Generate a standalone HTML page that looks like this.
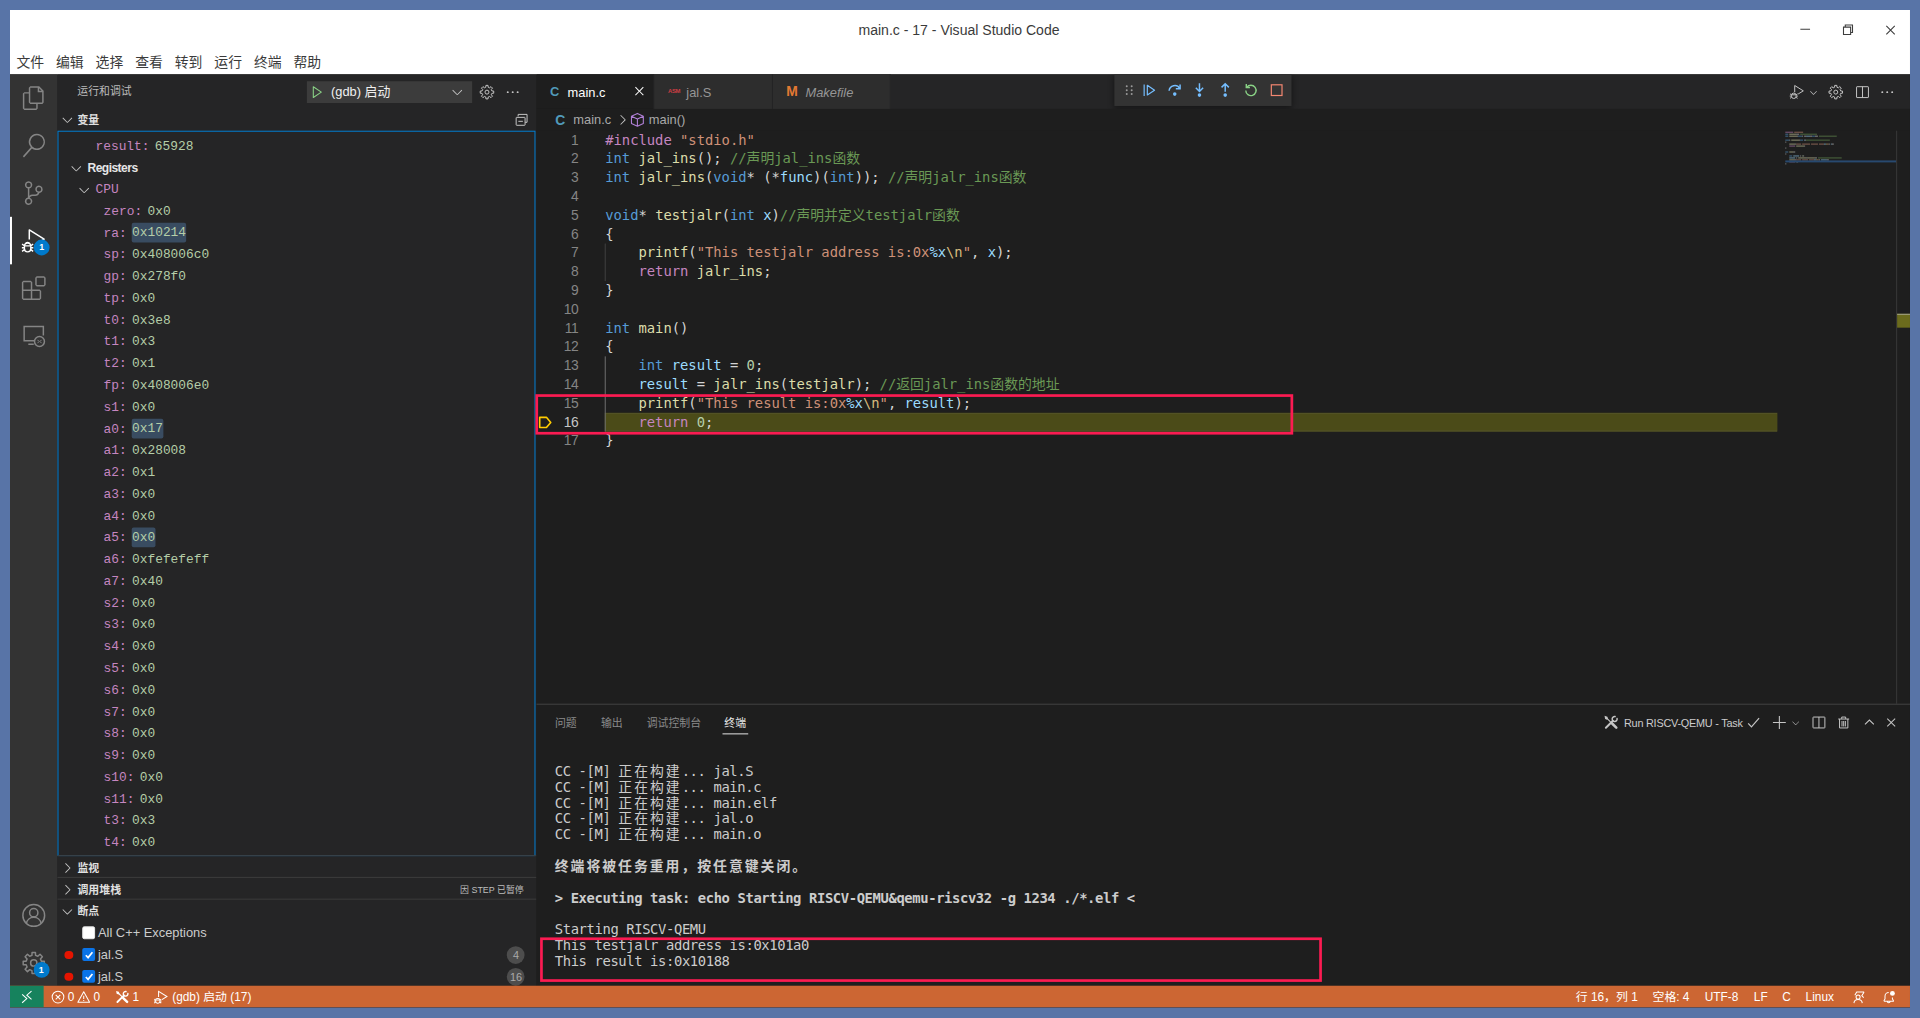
<!DOCTYPE html>
<html lang="zh-CN">
<head>
<meta charset="utf-8">
<title>main.c - 17 - Visual Studio Code</title>
<style>
*{box-sizing:border-box;margin:0;padding:0}
html,body{width:1920px;height:1018px;overflow:hidden}
body{background:#5874a7;position:relative;font-family:"Liberation Sans","Noto Sans CJK SC",sans-serif;font-size:13px;color:#ccc}
#win{position:absolute;left:10px;top:10px;width:1920px;height:1008.2px;transform:scale(0.98958);transform-origin:0 0;background:#1e1e1e;overflow:hidden}
.abs{position:absolute}
svg{display:block;overflow:visible}
.mono{font-family:"Liberation Mono","Noto Sans CJK SC",monospace}
.code{font-family:"DejaVu Sans Mono","Noto Sans CJK SC",monospace}
/* title + menu */
#title{left:0;top:0;width:1920px;height:65px;background:#fff}
#title .t{position:absolute;left:0;width:1918px;top:10px;height:20px;line-height:20px;text-align:center;font-size:14.2px;color:#3b3b3b}
#menu{position:absolute;left:0.5px;top:42px;height:22px;display:flex;font-size:14px;color:#3b3b3b;line-height:22px}
#menu span{display:block;width:40px;text-align:center}
/* activity bar */
#act{left:0;top:65px;width:48px;height:921.5px;background:#333}
#act .ic{position:absolute;left:12px;width:24px;height:24px}
/* sidebar */
#side{left:48px;top:65px;width:483.5px;height:921.5px;background:#252526}
/* editor */
#tabs{left:531.5px;top:65px;width:1388.5px;height:35px;background:#252526}
.tab{position:absolute;top:0;height:35px;background:#2d2d2d;border-right:1px solid #252526;font-size:13px;line-height:35px;color:#969696}
#bc{left:531.5px;top:100px;width:1388.5px;height:22px;background:#1e1e1e;font-size:13px;line-height:22px;color:#a9a9a9}
#ed{left:531.5px;top:122px;width:1388.5px;height:580px;background:#1e1e1e}
.ln{position:absolute;left:0;width:42.8px;text-align:right;font-size:14px;letter-spacing:-0.4px;line-height:19px;height:19px;color:#858585;font-family:"Liberation Sans","Noto Sans CJK SC",sans-serif}
.cl{position:absolute;left:70px;white-space:pre;font-size:14px;line-height:19px;height:19px;color:#d4d4d4;letter-spacing:-0.03px}
.k{color:#569cd6}.f{color:#dcdcaa}.v{color:#9cdcfe}.c{color:#6a9955}.s{color:#ce9178}.m{color:#c586c0}.n{color:#b5cea8}.e{color:#d7ba7d}
/* panel */
#panel{left:531.5px;top:702px;width:1388.5px;height:284.5px;background:#1e1e1e;border-top:1px solid #444}
.tl{position:absolute;left:19px;white-space:pre;font-size:14px;line-height:16px;height:16px;color:#ccc;letter-spacing:-0.40px}
.tl i{font-style:normal;letter-spacing:2px}
/* status */
#status{left:0;top:986.4px;width:1920px;height:21.8px;background:#cc6633;color:#fff;font-size:12px;line-height:22px}
#status .it{position:absolute;top:0;white-space:pre}
/* tree rows */
.row{position:absolute;left:0;width:483.5px;height:22px;line-height:22px;font-size:13px;white-space:pre}
.row .nm{color:#c586c0}.row .val{color:#b5cea8}
.row .chg{background:#394c61;border-radius:2px;padding:2.6px 0}
.hdr{position:absolute;left:0;width:483.5px;height:22px;line-height:22px;font-size:11px;font-weight:bold;color:#e0e0e0;border-top:1px solid #3c3c3c}
.red{position:absolute;border:2.7px solid #fb1b52}
</style>
</head>
<body>
<div id="win">
<div id="title" class="abs" style="height:64.7px">
<div class="t">main.c - 17 - Visual Studio Code</div>
<svg class="abs" style="left:1800px;top:8px" width="116" height="24" viewBox="1800 8 116 24" fill="none" stroke="#3d3d3d" stroke-width="1.1">
<path d="M1809.2 19.5H1819"/>
<path d="M1852.8 17.3h7.2v7.4h-7.2zM1854.6 17.3v-2.1h7.3v7.5h-1.9"/>
<path d="M1896.1 16.1l8.5 8.5M1904.6 16.1l-8.5 8.5"/>
</svg>
<div id="menu"><span>文件</span><span>编辑</span><span>选择</span><span>查看</span><span>转到</span><span>运行</span><span>终端</span><span>帮助</span></div>
</div>
<div id="act" class="abs" style="top:64.7px"><svg class="abs" style="left:12px;top:12.0px" width="24" height="24" viewBox="0 0 24 24" fill="#858585"><path d="M17.5 0h-9L7 1.5V6H2.5L1 7.5v15.07L2.5 24h12.07L16 22.57V18h4.7l1.3-1.43V4.5L17.5 0zm0 2.12l2.38 2.38H17.5V2.12zm-3 20.38h-12v-15H7v9.07L8.5 18h6v4.5zm6-6h-12v-15H16V6h4.5v10.5z"/></svg><svg class="abs" style="left:12px;top:60.0px" width="24" height="24" viewBox="0 0 24 24" fill="#858585"><path d="M15.25 0a8.25 8.25 0 0 0-6.18 13.72L1 22.88l1.12 1.12 8.05-9.12A8.251 8.251 0 1 0 15.25.01V0zm0 15a6.75 6.75 0 1 1 0-13.5 6.75 6.75 0 0 1 0 13.5z"/></svg><svg class="abs" style="left:12px;top:108.0px" width="24" height="24" viewBox="0 0 24 24" fill="#858585"><path d="M21.007 8.222A3.738 3.738 0 0 0 15.045 5.2a3.737 3.737 0 0 0 1.156 6.583 2.988 2.988 0 0 1-2.668 1.67h-2.99a4.456 4.456 0 0 0-2.989 1.165V7.4a3.737 3.737 0 1 0-1.494 0v9.117a3.776 3.776 0 1 0 1.816.099 2.99 2.99 0 0 1 2.668-1.667h2.99a4.484 4.484 0 0 0 4.223-3.039 3.736 3.736 0 0 0 3.25-3.687zM4.565 3.738a2.242 2.242 0 1 1 4.484 0 2.242 2.242 0 0 1-4.484 0zm4.484 16.441a2.242 2.242 0 1 1-4.484 0 2.242 2.242 0 0 1 4.484 0zm8.221-9.715a2.242 2.242 0 1 1 0-4.485 2.242 2.242 0 0 1 0 4.485z"/></svg><svg class="abs" style="left:12px;top:156.0px" width="24" height="24" viewBox="0 0 24 24" fill="#fff"><g fill="none" stroke="#fff" stroke-width="1.5" stroke-linejoin="round"><path d="M7.5 11V1.2l15 9.3-8.8 5.500"/></g><g fill="none" stroke="#fff" stroke-width="1.4"><rect x="2.600" y="14.600" width="6.400" height="8.800" rx="3.100"/><path d="M3.600 15.400a2.300 2.300 0 0 1 4.400 0M2.600 17.200L.2 15.600M2.600 19.300H0M2.600 21.200L.2 22.900M9 17.200l2.400-1.600M9 19.300h2.600M9 21.200l2.400 1.700M2.900 17.400h5.800"/></g></svg><svg class="abs" style="left:12px;top:204.0px" width="24" height="24" viewBox="0 0 24 24" fill="#858585"><path d="M13.5 1.5L15 0h7.5L24 1.5V9l-1.5 1.5H15L13.5 9V1.5zm1.5 0V9h7.5V1.5H15zM0 15V6l1.5-1.5H9L10.5 6v7.5H18l1.5 1.5v7.5L18 24H1.5L0 22.5V15zm9-1.5V6H1.5v7.5H9zM9 15H1.5v7.5H9V15zm1.5 7.5H18V15h-7.5v7.5z"/></svg><svg class="abs" style="left:12px;top:252.0px" width="24" height="24" viewBox="0 0 24 24" fill="#858585"><g fill="none" stroke="#858585" stroke-width="1.5"><path d="M13 17.2H2.3V2.8h19.4v9.2M6.5 20.8h5.5"/><circle cx="17.8" cy="18" r="5"/><path d="M15.8 16.3l1.6 1.7-1.6 1.7M19.9 16.3l-1.6 1.7 1.6 1.7" stroke-width="1"/></g></svg><div class="abs" style="left:0;top:144px;width:2px;height:48px;background:#fff"></div><div class="abs" style="left:24.2px;top:167.5px;width:16px;height:16px;border-radius:8px;background:#007acc;color:#fff;font-size:9px;font-weight:bold;line-height:16px;text-align:center">1</div><svg class="abs" style="left:12px;top:838px" width="24" height="24" viewBox="0 0 24 24"><g fill="none" stroke="#858585" stroke-width="1.5"><circle cx="12" cy="12" r="11"/><circle cx="12" cy="9.2" r="4.2"/><path d="M4.6 20c.6-3.6 3.6-6.2 7.4-6.2s6.800 2.600 7.400 6.200"/></g></svg><svg class="abs" style="left:12px;top:886px" width="24" height="24" viewBox="0 0 24 24"><g fill="none" stroke="#858585" stroke-width="1.5" stroke-linejoin="round"><path d="M10.16 4.32 L10.31 1.33 L13.69 1.33 L13.84 4.32 L16.13 5.26 L18.35 3.26 L20.74 5.65 L18.74 7.87 L19.68 10.16 L22.67 10.31 L22.67 13.69 L19.68 13.84 L18.74 16.13 L20.74 18.35 L18.35 20.74 L16.13 18.74 L13.84 19.68 L13.69 22.67 L10.31 22.67 L10.16 19.68 L7.87 18.74 L5.65 20.74 L3.26 18.35 L5.26 16.13 L4.32 13.84 L1.33 13.69 L1.33 10.31 L4.32 10.16 L5.26 7.87 L3.26 5.65 L5.65 3.26 L7.87 5.26Z"/><circle cx="12" cy="12" r="3.200"/></g></svg><div class="abs" style="left:23.5px;top:897.3px;width:16px;height:16px;border-radius:8px;background:#007acc;color:#fff;font-size:9px;font-weight:bold;line-height:16px;text-align:center">1</div></div>
<div id="side" class="abs" style="top:64.7px"><div class="abs" style="left:20px;top:7px;line-height:21px;font-size:11px;color:#bbb">运行和调试</div><div class="abs" style="left:252px;top:7.3px;width:167px;height:22px;background:#3c3c3c;color:#f0f0f0;font-size:13px;line-height:22px"><span class="abs" style="left:24.4px;top:0;white-space:pre">(gdb) 启动</span><svg class="abs" style="left:2px;top:3.3px" width="16" height="16" viewBox="0 0 16 16"><path fill="none" stroke="#89d185" stroke-width="1.1" stroke-linejoin="round" d="M4.5 2.6v10.8L12.6 8z"/></svg><svg class="abs" style="left:143.7px;top:3.0px" width="16" height="16" viewBox="0 0 16 16" fill="#c5c5c5"><path fill="#c5c5c5" d="M7.976 10.072l4.357-4.357.62.618L8.284 11h-.618L3 6.333l.619-.618 4.357 4.357z"/></svg></div><svg class="abs" style="left:425.6px;top:10.4px" width="16" height="16" viewBox="0 0 16 16"><g fill="none" stroke="#c5c5c5" stroke-width="1" stroke-linejoin="round"><path d="M6.81 3.04 L6.92 1.18 L9.08 1.18 L9.19 3.04 L10.66 3.65 L12.06 2.42 L13.58 3.94 L12.35 5.34 L12.96 6.81 L14.82 6.92 L14.82 9.08 L12.96 9.19 L12.35 10.66 L13.58 12.06 L12.06 13.58 L10.66 12.35 L9.19 12.96 L9.08 14.82 L6.92 14.82 L6.81 12.96 L5.34 12.35 L3.94 13.58 L2.42 12.06 L3.65 10.66 L3.04 9.19 L1.18 9.08 L1.18 6.92 L3.04 6.81 L3.65 5.34 L2.42 3.94 L3.94 2.42 L5.34 3.65Z"/><circle cx="8" cy="8" r="2"/></g></svg><svg class="abs" style="left:452.0px;top:10.4px" width="16" height="16" viewBox="0 0 16 16" fill="#c5c5c5"><path d="M4 8a1 1 0 1 1-2 0 1 1 0 0 1 2 0zm5 0a1 1 0 1 1-2 0 1 1 0 0 1 2 0zm5 0a1 1 0 1 1-2 0 1 1 0 0 1 2 0z"/></svg><div class="hdr" style="top:35px;border-top:none"><span class="abs" style="left:20.2px">变量</span><svg class="abs" style="left:1.6px;top:3.0px" width="16" height="16" viewBox="0 0 16 16" fill="#c5c5c5"><path fill="#c5c5c5" d="M7.976 10.072l4.357-4.357.62.618L8.284 11h-.618L3 6.333l.619-.618 4.357 4.357z"/></svg><svg class="abs" style="left:461px;top:3px" width="16" height="16" viewBox="0 0 16 16" fill="none" stroke="#c5c5c5" stroke-width="1"><path d="M4.5 4.5V2.5h9v8h-2"/><rect x="2.5" y="5.5" width="9" height="8" rx="0.5" fill="#252526"/><path d="M4.7 9.5h4.6"/></svg></div><div class="abs" style="left:-0.5px;top:57px;width:483.4px;height:733px;border:1px solid #007fd4;overflow:hidden"></div><div class="row mono" style="top:62.2px"><span class="abs" style="left:38.4px"><span class="nm">result:</span><span class="val" style="margin-left:5.4px">65928</span></span></div><div class="row" style="top:84.2px"><svg class="abs" style="left:10.7px;top:3.0px" width="16" height="16" viewBox="0 0 16 16" fill="#c5c5c5"><path fill="#c5c5c5" d="M7.976 10.072l4.357-4.357.62.618L8.284 11h-.618L3 6.333l.619-.618 4.357 4.357z"/></svg><span class="abs" style="left:30.3px;font-weight:bold;color:#e6e6e6;font-size:12.2px;letter-spacing:-0.55px">Registers</span></div><div class="row mono" style="top:106.2px"><svg class="abs" style="left:18.8px;top:3.0px" width="16" height="16" viewBox="0 0 16 16" fill="#c5c5c5"><path fill="#c5c5c5" d="M7.976 10.072l4.357-4.357.62.618L8.284 11h-.618L3 6.333l.619-.618 4.357 4.357z"/></svg><span class="abs nm" style="left:38.4px">CPU</span></div><div class="row mono" style="top:128.2px"><span class="abs" style="left:46.5px"><span class="nm">zero:</span><span class="val" style="margin-left:5.4px">0x0</span></span></div><div class="row mono" style="top:150.2px"><span class="abs" style="left:46.5px"><span class="nm">ra:</span><span class="val chg" style="margin-left:5.4px">0x10214</span></span></div><div class="row mono" style="top:172.2px"><span class="abs" style="left:46.5px"><span class="nm">sp:</span><span class="val" style="margin-left:5.4px">0x408006c0</span></span></div><div class="row mono" style="top:194.2px"><span class="abs" style="left:46.5px"><span class="nm">gp:</span><span class="val" style="margin-left:5.4px">0x278f0</span></span></div><div class="row mono" style="top:216.2px"><span class="abs" style="left:46.5px"><span class="nm">tp:</span><span class="val" style="margin-left:5.4px">0x0</span></span></div><div class="row mono" style="top:238.2px"><span class="abs" style="left:46.5px"><span class="nm">t0:</span><span class="val" style="margin-left:5.4px">0x3e8</span></span></div><div class="row mono" style="top:260.2px"><span class="abs" style="left:46.5px"><span class="nm">t1:</span><span class="val" style="margin-left:5.4px">0x3</span></span></div><div class="row mono" style="top:282.2px"><span class="abs" style="left:46.5px"><span class="nm">t2:</span><span class="val" style="margin-left:5.4px">0x1</span></span></div><div class="row mono" style="top:304.2px"><span class="abs" style="left:46.5px"><span class="nm">fp:</span><span class="val" style="margin-left:5.4px">0x408006e0</span></span></div><div class="row mono" style="top:326.2px"><span class="abs" style="left:46.5px"><span class="nm">s1:</span><span class="val" style="margin-left:5.4px">0x0</span></span></div><div class="row mono" style="top:348.2px"><span class="abs" style="left:46.5px"><span class="nm">a0:</span><span class="val chg" style="margin-left:5.4px">0x17</span></span></div><div class="row mono" style="top:370.2px"><span class="abs" style="left:46.5px"><span class="nm">a1:</span><span class="val" style="margin-left:5.4px">0x28008</span></span></div><div class="row mono" style="top:392.2px"><span class="abs" style="left:46.5px"><span class="nm">a2:</span><span class="val" style="margin-left:5.4px">0x1</span></span></div><div class="row mono" style="top:414.2px"><span class="abs" style="left:46.5px"><span class="nm">a3:</span><span class="val" style="margin-left:5.4px">0x0</span></span></div><div class="row mono" style="top:436.2px"><span class="abs" style="left:46.5px"><span class="nm">a4:</span><span class="val" style="margin-left:5.4px">0x0</span></span></div><div class="row mono" style="top:458.2px"><span class="abs" style="left:46.5px"><span class="nm">a5:</span><span class="val chg" style="margin-left:5.4px">0x0</span></span></div><div class="row mono" style="top:480.2px"><span class="abs" style="left:46.5px"><span class="nm">a6:</span><span class="val" style="margin-left:5.4px">0xfefefeff</span></span></div><div class="row mono" style="top:502.2px"><span class="abs" style="left:46.5px"><span class="nm">a7:</span><span class="val" style="margin-left:5.4px">0x40</span></span></div><div class="row mono" style="top:524.2px"><span class="abs" style="left:46.5px"><span class="nm">s2:</span><span class="val" style="margin-left:5.4px">0x0</span></span></div><div class="row mono" style="top:546.2px"><span class="abs" style="left:46.5px"><span class="nm">s3:</span><span class="val" style="margin-left:5.4px">0x0</span></span></div><div class="row mono" style="top:568.2px"><span class="abs" style="left:46.5px"><span class="nm">s4:</span><span class="val" style="margin-left:5.4px">0x0</span></span></div><div class="row mono" style="top:590.2px"><span class="abs" style="left:46.5px"><span class="nm">s5:</span><span class="val" style="margin-left:5.4px">0x0</span></span></div><div class="row mono" style="top:612.2px"><span class="abs" style="left:46.5px"><span class="nm">s6:</span><span class="val" style="margin-left:5.4px">0x0</span></span></div><div class="row mono" style="top:634.2px"><span class="abs" style="left:46.5px"><span class="nm">s7:</span><span class="val" style="margin-left:5.4px">0x0</span></span></div><div class="row mono" style="top:656.2px"><span class="abs" style="left:46.5px"><span class="nm">s8:</span><span class="val" style="margin-left:5.4px">0x0</span></span></div><div class="row mono" style="top:678.2px"><span class="abs" style="left:46.5px"><span class="nm">s9:</span><span class="val" style="margin-left:5.4px">0x0</span></span></div><div class="row mono" style="top:700.2px"><span class="abs" style="left:46.5px"><span class="nm">s10:</span><span class="val" style="margin-left:5.4px">0x0</span></span></div><div class="row mono" style="top:722.2px"><span class="abs" style="left:46.5px"><span class="nm">s11:</span><span class="val" style="margin-left:5.4px">0x0</span></span></div><div class="row mono" style="top:744.2px"><span class="abs" style="left:46.5px"><span class="nm">t3:</span><span class="val" style="margin-left:5.4px">0x3</span></span></div><div class="row mono" style="top:766.2px"><span class="abs" style="left:46.5px"><span class="nm">t4:</span><span class="val" style="margin-left:5.4px">0x0</span></span></div><div class="hdr" style="top:789.8px"><span class="abs" style="left:20.2px;top:0.5px">监视</span><svg class="abs" style="left:1.8px;top:3.3px" width="16" height="16" viewBox="0 0 16 16" fill="#c5c5c5"><path fill="#c5c5c5" d="M10.072 8.024L5.715 3.667l.618-.62L11 7.716v.618L6.333 13l-.618-.619 4.357-4.357z"/></svg></div><div class="hdr" style="top:811.8px"><span class="abs" style="left:20.2px;top:0.5px">调用堆栈</span><svg class="abs" style="left:1.8px;top:3.3px" width="16" height="16" viewBox="0 0 16 16" fill="#c5c5c5"><path fill="#c5c5c5" d="M10.072 8.024L5.715 3.667l.618-.62L11 7.716v.618L6.333 13l-.618-.619 4.357-4.357z"/></svg><span class="abs" style="right:12.3px;top:0.5px;font-size:9px;font-weight:normal;color:#bdbdbd;white-space:pre">因 STEP 已暂停</span></div><div class="hdr" style="top:833.8px"><span class="abs" style="left:20.2px;top:0.5px">断点</span><svg class="abs" style="left:1.8px;top:3.3px" width="16" height="16" viewBox="0 0 16 16" fill="#c5c5c5"><path fill="#c5c5c5" d="M7.976 10.072l4.357-4.357.62.618L8.284 11h-.618L3 6.333l.619-.618 4.357 4.357z"/></svg></div><div class="row" style="top:857.1px;color:#ccc"><span class="abs" style="left:25px;top:4.5px;width:13px;height:13px;background:#fff;border-radius:2px;border:1px solid #e8e8e8"></span><span class="abs" style="left:40.9px">All C++ Exceptions</span></div><div class="row" style="top:879.1px;color:#ccc"><span class="abs" style="left:7.4px;top:6.8px;width:8.4px;height:8.4px;border-radius:50%;background:#e51400"></span><span class="abs" style="left:25px;top:4.5px;width:13px;height:13px;background:#0a74e8;border-radius:2px"><svg class="abs" style="left:1.5px;top:1.5px" width="10" height="10" viewBox="0 0 10 10"><path d="M1.6 5.2l2.3 2.4 4.400-5.400" fill="none" stroke="#fff" stroke-width="1.7"/></svg></span><span class="abs" style="left:40.9px">jal.S</span><span class="abs" style="left:454.3px;top:2px;width:18px;height:18px;border-radius:9px;background:#4d4d4d;color:#aaa;font-size:11px;line-height:18px;text-align:center">4</span></div><div class="row" style="top:901.1px;color:#ccc"><span class="abs" style="left:7.4px;top:6.8px;width:8.4px;height:8.4px;border-radius:50%;background:#e51400"></span><span class="abs" style="left:25px;top:4.5px;width:13px;height:13px;background:#0a74e8;border-radius:2px"><svg class="abs" style="left:1.5px;top:1.5px" width="10" height="10" viewBox="0 0 10 10"><path d="M1.6 5.2l2.3 2.4 4.400-5.400" fill="none" stroke="#fff" stroke-width="1.7"/></svg></span><span class="abs" style="left:40.9px">jal.S</span><span class="abs" style="left:454.3px;top:2px;width:18px;height:18px;border-radius:9px;background:#4d4d4d;color:#aaa;font-size:11px;line-height:18px;text-align:center">16</span></div></div>
<div id="tabs" class="abs" style="top:64.7px"><div class="tab" style="left:0;width:119.5px;background:#1e1e1e;color:#fff"><span class="abs" style="left:14.3px;top:0.8px;color:#519aba;font-weight:bold;font-size:13px">C</span><span class="abs" style="left:31.9px;top:1px">main.c</span><svg class="abs" style="left:96.5px;top:9.8px" width="16" height="16" viewBox="0 0 16 16" fill="#fff"><path d="M8 8.707l3.646 3.647.708-.707L8.707 8l3.647-3.646-.707-.708L8 7.293 4.354 3.646l-.707.708L7.293 8l-3.646 3.646.707.708L8 8.707z"/></svg></div><div class="tab" style="left:119.5px;width:120px"><span class="abs" style="left:14px;top:0.3px;color:#cc3e44;font-weight:bold;font-size:6px;letter-spacing:-0.4px">ASM</span><span class="abs" style="left:32.4px;top:1px">jal.S</span></div><div class="tab" style="left:239.5px;width:119px;font-style:italic"><span class="abs" style="left:13.5px;top:0;color:#e37933;font-weight:bold;font-style:normal;font-size:14px">M</span><span class="abs" style="left:32.8px;top:1px">Makefile</span></div><div class="abs" style="left:584.8px;top:0;width:178.3px;height:32.1px;background:#333;box-shadow:0 2px 6px rgba(0,0,0,.45);clip-path:inset(0 -10px -10px -10px)"><svg class="abs" style="left:6.5px;top:8.2px" width="16" height="16" viewBox="0 0 16 16"><g fill="#9a9a9a"><circle cx="5.5" cy="4" r="1"/><circle cx="10.5" cy="4" r="1"/><circle cx="5.5" cy="8" r="1"/><circle cx="10.5" cy="8" r="1"/><circle cx="5.5" cy="12" r="1"/><circle cx="10.5" cy="12" r="1"/></g></svg><svg class="abs" style="left:26.7px;top:8.2px" width="16" height="16" viewBox="0 0 16 16"><g fill="none" stroke="#75beff" stroke-width="1.2" stroke-linejoin="round"><path d="M3.1 2.2v11.6"/><path d="M6.300 3.1v9.800L13.6 8z"/></g></svg><svg class="abs" style="left:52.4px;top:8.2px" width="16" height="16" viewBox="0 0 16 16"><g fill="none" stroke="#75beff" stroke-width="1.5"><path d="M2.3 8.6A5.8 5.8 0 0 1 13 6.2"/><path d="M13.4 2.3v4.3H9.100" stroke-linejoin="miter"/></g><circle cx="8" cy="12" r="1.8" fill="#75beff"/></svg><svg class="abs" style="left:77.7px;top:8.2px" width="16" height="16" viewBox="0 0 16 16"><g fill="none" stroke="#75beff" stroke-width="1.5"><path d="M8 1v8M4.300 5.600L8 9.300l3.700-3.700"/></g><circle cx="8" cy="13" r="1.8" fill="#75beff"/></svg><svg class="abs" style="left:103.5px;top:8.2px" width="16" height="16" viewBox="0 0 16 16"><g fill="none" stroke="#75beff" stroke-width="1.5"><path d="M8 9.600V1.600M4.300 5.200L8 1.500l3.700 3.700"/></g><circle cx="8" cy="13" r="1.8" fill="#75beff"/></svg><svg class="abs" style="left:129.7px;top:8.2px" width="16" height="16" viewBox="0 0 16 16"><g fill="none" stroke="#89d185" stroke-width="1.4"><path d="M3.800 5.200A5.200 5.200 0 1 1 2.800 8.300"/><path d="M3.300 1.800v3.700H7"/></g></svg><svg class="abs" style="left:156.0px;top:8.2px" width="16" height="16" viewBox="0 0 16 16"><rect x="2.600" y="2.600" width="10.800" height="10.800" fill="none" stroke="#f48771" stroke-width="1.2"/></svg></div><svg class="abs" style="left:1266.8px;top:10px" width="16" height="16" viewBox="0 0 16 16" fill="#c5c5c5"><g fill="none" stroke="#c5c5c5" stroke-width="1"><path d="M5.500 8V1.300l8.700 5.400-5.200 3.200"/><rect x="2.300" y="9" width="4.600" height="5.400" rx="2.200"/><path d="M2.300 10.600L.8 9.800M2.300 12H.5M2.300 13.300l-1.500.9M6.900 10.600l1.500-.8M6.900 12h1.800M6.900 13.300l1.500.9M2.600 10.700h4"/></g></svg><svg class="abs" style="left:1285.3px;top:13px" width="11" height="11" viewBox="0 0 16 16"><path fill="#c5c5c5" d="M7.976 10.072l4.357-4.357.62.618L8.284 11h-.618L3 6.333l.619-.618 4.357 4.357z"/></svg><svg class="abs" style="left:1305.5px;top:10px" width="16" height="16" viewBox="0 0 16 16"><g fill="none" stroke="#c5c5c5" stroke-width="1" stroke-linejoin="round"><path d="M6.81 3.04 L6.92 1.18 L9.08 1.18 L9.19 3.04 L10.66 3.65 L12.06 2.42 L13.58 3.94 L12.35 5.34 L12.96 6.81 L14.82 6.92 L14.82 9.08 L12.96 9.19 L12.35 10.66 L13.58 12.06 L12.06 13.58 L10.66 12.35 L9.19 12.96 L9.08 14.82 L6.92 14.82 L6.81 12.96 L5.34 12.35 L3.94 13.58 L2.42 12.06 L3.65 10.66 L3.04 9.19 L1.18 9.08 L1.18 6.92 L3.04 6.81 L3.65 5.34 L2.42 3.94 L3.94 2.42 L5.34 3.65Z"/><circle cx="8" cy="8" r="2"/></g></svg><svg class="abs" style="left:1332.2px;top:10px" width="16" height="16" viewBox="0 0 16 16" fill="#c5c5c5"><g fill="none" stroke="#c5c5c5" stroke-width="1"><rect x="2" y="2.500" width="12" height="11" rx="0.500"/><path d="M8 2.500v11"/></g></svg><svg class="abs" style="left:1357.5px;top:10px" width="16" height="16" viewBox="0 0 16 16" fill="#c5c5c5"><path d="M4 8a1 1 0 1 1-2 0 1 1 0 0 1 2 0zm5 0a1 1 0 1 1-2 0 1 1 0 0 1 2 0zm5 0a1 1 0 1 1-2 0 1 1 0 0 1 2 0z"/></svg></div><div id="bc" class="abs" style="top:99.7px"><span class="abs" style="left:19.5px;color:#519aba;font-weight:bold;font-size:14px">C</span><span class="abs" style="left:37.8px">main.c</span><svg class="abs" style="left:79.0px;top:3.3px" width="16" height="16" viewBox="0 0 16 16" fill="#c5c5c5"><path fill="#c5c5c5" d="M10.072 8.024L5.715 3.667l.618-.62L11 7.716v.618L6.333 13l-.618-.619 4.357-4.357z"/></svg><svg class="abs" style="left:94.4px;top:3.500px" width="16" height="16" viewBox="0 0 16 16" fill="none" stroke="#b180d7" stroke-width="1.1" stroke-linejoin="round"><path d="M8 1.500l6 2.800v7.400l-6 2.800-6-2.800V4.300zM2 4.300l6 2.800 6-2.800M8 7.100v7.400"/></svg><span class="abs" style="left:114px">main()</span></div>
<div id="ed" class="abs" style="top:121.7px"><div class="abs" style="left:69.9px;top:285px;width:1184.6px;height:19px;background:#4b4b18;box-shadow:inset 0 1px 0 #55552a,inset 0 -1px 0 #55552a"></div><div class="abs" style="left:69.9px;top:114px;width:1px;height:38px;background:#404040"></div><div class="abs" style="left:69.9px;top:228px;width:1px;height:76px;background:#707070"></div><div class="ln" style="top:0px;color:#858585">1</div><div class="cl code" style="top:0px"><span class="m">#include</span> <span class="s">"stdio.h"</span></div><div class="ln" style="top:19px;color:#858585">2</div><div class="cl code" style="top:19px"><span class="k">int</span> <span class="f">jal_ins</span>(); <span class="c">//声明jal_ins函数</span></div><div class="ln" style="top:38px;color:#858585">3</div><div class="cl code" style="top:38px"><span class="k">int</span> <span class="f">jalr_ins</span>(<span class="k">void</span>* (*<span class="v">func</span>)(<span class="k">int</span>)); <span class="c">//声明jalr_ins函数</span></div><div class="ln" style="top:57px;color:#858585">4</div><div class="ln" style="top:76px;color:#858585">5</div><div class="cl code" style="top:76px"><span class="k">void</span>* <span class="f">testjalr</span>(<span class="k">int</span> <span class="v">x</span>)<span class="c">//声明并定义testjalr函数</span></div><div class="ln" style="top:95px;color:#858585">6</div><div class="cl code" style="top:95px">{</div><div class="ln" style="top:114px;color:#858585">7</div><div class="cl code" style="top:114px">    <span class="f">printf</span>(<span class="s">"This testjalr address is:0x</span><span class="v">%x</span><span class="e">\n</span><span class="s">"</span>, <span class="v">x</span>);</div><div class="ln" style="top:133px;color:#858585">8</div><div class="cl code" style="top:133px">    <span class="m">return</span> <span class="f">jalr_ins</span>;</div><div class="ln" style="top:152px;color:#858585">9</div><div class="cl code" style="top:152px">}</div><div class="ln" style="top:171px;color:#858585">10</div><div class="ln" style="top:190px;color:#858585">11</div><div class="cl code" style="top:190px"><span class="k">int</span> <span class="f">main</span>()</div><div class="ln" style="top:209px;color:#858585">12</div><div class="cl code" style="top:209px">{</div><div class="ln" style="top:228px;color:#858585">13</div><div class="cl code" style="top:228px">    <span class="k">int</span> <span class="v">result</span> = <span class="n">0</span>;</div><div class="ln" style="top:247px;color:#858585">14</div><div class="cl code" style="top:247px">    <span class="v">result</span> = <span class="f">jalr_ins</span>(<span class="f">testjalr</span>); <span class="c">//返回jalr_ins函数的地址</span></div><div class="ln" style="top:266px;color:#858585">15</div><div class="cl code" style="top:266px">    <span class="f">printf</span>(<span class="s">"This result is:0x</span><span class="v">%x</span><span class="e">\n</span><span class="s">"</span>, <span class="v">result</span>);</div><div class="ln" style="top:285px;color:#c6c6c6">16</div><div class="cl code" style="top:285px">    <span class="m">return</span> <span class="n">0</span>;</div><div class="ln" style="top:304px;color:#858585">17</div><div class="cl code" style="top:304px">}</div><svg class="abs" style="left:0.8px;top:286.4px" width="17.5" height="17.5" viewBox="0 0 16 16"><path d="M3 3.300h6.200l4 4.700-4 4.700H3z" fill="none" stroke="#ffcc00" stroke-width="1.500" stroke-linejoin="round"/></svg><div class="abs" style="left:1262px;top:0;width:112px;height:580px"><div class="abs" style="left:0.0px;top:1.0px;width:8.0px;height:1.300px;background:#c586c0;opacity:.6"></div><div class="abs" style="left:9.0px;top:1.0px;width:9.0px;height:1.300px;background:#ce9178;opacity:.6"></div><div class="abs" style="left:0.0px;top:3.0px;width:3.0px;height:1.300px;background:#569cd6;opacity:.6"></div><div class="abs" style="left:4.0px;top:3.0px;width:7.0px;height:1.300px;background:#dcdcaa;opacity:.6"></div><div class="abs" style="left:11.0px;top:3.0px;width:3.0px;height:1.300px;background:#d4d4d4;opacity:.6"></div><div class="abs" style="left:15.0px;top:3.0px;width:17.0px;height:1.300px;background:#6a9955;opacity:.6"></div><div class="abs" style="left:0.0px;top:5.0px;width:3.0px;height:1.300px;background:#569cd6;opacity:.6"></div><div class="abs" style="left:4.0px;top:5.0px;width:8.0px;height:1.300px;background:#dcdcaa;opacity:.6"></div><div class="abs" style="left:12.0px;top:5.0px;width:1.0px;height:1.300px;background:#d4d4d4;opacity:.6"></div><div class="abs" style="left:13.0px;top:5.0px;width:4.0px;height:1.300px;background:#569cd6;opacity:.6"></div><div class="abs" style="left:17.0px;top:5.0px;width:1.0px;height:1.300px;background:#d4d4d4;opacity:.6"></div><div class="abs" style="left:19.0px;top:5.0px;width:2.0px;height:1.300px;background:#d4d4d4;opacity:.6"></div><div class="abs" style="left:21.0px;top:5.0px;width:4.0px;height:1.300px;background:#9cdcfe;opacity:.6"></div><div class="abs" style="left:25.0px;top:5.0px;width:2.0px;height:1.300px;background:#d4d4d4;opacity:.6"></div><div class="abs" style="left:27.0px;top:5.0px;width:3.0px;height:1.300px;background:#569cd6;opacity:.6"></div><div class="abs" style="left:30.0px;top:5.0px;width:3.0px;height:1.300px;background:#d4d4d4;opacity:.6"></div><div class="abs" style="left:34.0px;top:5.0px;width:18.0px;height:1.300px;background:#6a9955;opacity:.6"></div><div class="abs" style="left:0.0px;top:9.0px;width:4.0px;height:1.300px;background:#569cd6;opacity:.6"></div><div class="abs" style="left:4.0px;top:9.0px;width:1.0px;height:1.300px;background:#d4d4d4;opacity:.6"></div><div class="abs" style="left:6.0px;top:9.0px;width:8.0px;height:1.300px;background:#dcdcaa;opacity:.6"></div><div class="abs" style="left:14.0px;top:9.0px;width:1.0px;height:1.300px;background:#d4d4d4;opacity:.6"></div><div class="abs" style="left:15.0px;top:9.0px;width:3.0px;height:1.300px;background:#569cd6;opacity:.6"></div><div class="abs" style="left:19.0px;top:9.0px;width:1.0px;height:1.300px;background:#9cdcfe;opacity:.6"></div><div class="abs" style="left:20.0px;top:9.0px;width:1.0px;height:1.300px;background:#d4d4d4;opacity:.6"></div><div class="abs" style="left:21.0px;top:9.0px;width:24.0px;height:1.300px;background:#6a9955;opacity:.6"></div><div class="abs" style="left:0.0px;top:11.0px;width:1.0px;height:1.300px;background:#d4d4d4;opacity:.6"></div><div class="abs" style="left:4.0px;top:13.0px;width:6.0px;height:1.300px;background:#dcdcaa;opacity:.6"></div><div class="abs" style="left:10.0px;top:13.0px;width:1.0px;height:1.300px;background:#d4d4d4;opacity:.6"></div><div class="abs" style="left:11.0px;top:13.0px;width:5.0px;height:1.300px;background:#ce9178;opacity:.6"></div><div class="abs" style="left:17.0px;top:13.0px;width:8.0px;height:1.300px;background:#ce9178;opacity:.6"></div><div class="abs" style="left:26.0px;top:13.0px;width:7.0px;height:1.300px;background:#ce9178;opacity:.6"></div><div class="abs" style="left:34.0px;top:13.0px;width:5.0px;height:1.300px;background:#ce9178;opacity:.6"></div><div class="abs" style="left:39.0px;top:13.0px;width:2.0px;height:1.300px;background:#9cdcfe;opacity:.6"></div><div class="abs" style="left:41.0px;top:13.0px;width:2.0px;height:1.300px;background:#d7ba7d;opacity:.6"></div><div class="abs" style="left:43.0px;top:13.0px;width:1.0px;height:1.300px;background:#ce9178;opacity:.6"></div><div class="abs" style="left:44.0px;top:13.0px;width:1.0px;height:1.300px;background:#d4d4d4;opacity:.6"></div><div class="abs" style="left:46.0px;top:13.0px;width:1.0px;height:1.300px;background:#9cdcfe;opacity:.6"></div><div class="abs" style="left:47.0px;top:13.0px;width:2.0px;height:1.300px;background:#d4d4d4;opacity:.6"></div><div class="abs" style="left:4.0px;top:15.0px;width:6.0px;height:1.300px;background:#c586c0;opacity:.6"></div><div class="abs" style="left:11.0px;top:15.0px;width:8.0px;height:1.300px;background:#dcdcaa;opacity:.6"></div><div class="abs" style="left:19.0px;top:15.0px;width:1.0px;height:1.300px;background:#d4d4d4;opacity:.6"></div><div class="abs" style="left:0.0px;top:17.0px;width:1.0px;height:1.300px;background:#d4d4d4;opacity:.6"></div><div class="abs" style="left:0.0px;top:21.0px;width:3.0px;height:1.300px;background:#569cd6;opacity:.6"></div><div class="abs" style="left:4.0px;top:21.0px;width:4.0px;height:1.300px;background:#dcdcaa;opacity:.6"></div><div class="abs" style="left:8.0px;top:21.0px;width:2.0px;height:1.300px;background:#d4d4d4;opacity:.6"></div><div class="abs" style="left:0.0px;top:23.0px;width:1.0px;height:1.300px;background:#d4d4d4;opacity:.6"></div><div class="abs" style="left:4.0px;top:25.0px;width:3.0px;height:1.300px;background:#569cd6;opacity:.6"></div><div class="abs" style="left:8.0px;top:25.0px;width:6.0px;height:1.300px;background:#9cdcfe;opacity:.6"></div><div class="abs" style="left:15.0px;top:25.0px;width:1.0px;height:1.300px;background:#d4d4d4;opacity:.6"></div><div class="abs" style="left:17.0px;top:25.0px;width:1.0px;height:1.300px;background:#b5cea8;opacity:.6"></div><div class="abs" style="left:18.0px;top:25.0px;width:1.0px;height:1.300px;background:#d4d4d4;opacity:.6"></div><div class="abs" style="left:4.0px;top:27.0px;width:6.0px;height:1.300px;background:#9cdcfe;opacity:.6"></div><div class="abs" style="left:11.0px;top:27.0px;width:1.0px;height:1.300px;background:#d4d4d4;opacity:.6"></div><div class="abs" style="left:13.0px;top:27.0px;width:8.0px;height:1.300px;background:#dcdcaa;opacity:.6"></div><div class="abs" style="left:21.0px;top:27.0px;width:1.0px;height:1.300px;background:#d4d4d4;opacity:.6"></div><div class="abs" style="left:22.0px;top:27.0px;width:8.0px;height:1.300px;background:#dcdcaa;opacity:.6"></div><div class="abs" style="left:30.0px;top:27.0px;width:2.0px;height:1.300px;background:#d4d4d4;opacity:.6"></div><div class="abs" style="left:33.0px;top:27.0px;width:24.0px;height:1.300px;background:#6a9955;opacity:.6"></div><div class="abs" style="left:4.0px;top:29.0px;width:6.0px;height:1.300px;background:#dcdcaa;opacity:.6"></div><div class="abs" style="left:10.0px;top:29.0px;width:1.0px;height:1.300px;background:#d4d4d4;opacity:.6"></div><div class="abs" style="left:11.0px;top:29.0px;width:5.0px;height:1.300px;background:#ce9178;opacity:.6"></div><div class="abs" style="left:17.0px;top:29.0px;width:6.0px;height:1.300px;background:#ce9178;opacity:.6"></div><div class="abs" style="left:24.0px;top:29.0px;width:5.0px;height:1.300px;background:#ce9178;opacity:.6"></div><div class="abs" style="left:29.0px;top:29.0px;width:2.0px;height:1.300px;background:#9cdcfe;opacity:.6"></div><div class="abs" style="left:31.0px;top:29.0px;width:2.0px;height:1.300px;background:#d7ba7d;opacity:.6"></div><div class="abs" style="left:33.0px;top:29.0px;width:1.0px;height:1.300px;background:#ce9178;opacity:.6"></div><div class="abs" style="left:34.0px;top:29.0px;width:1.0px;height:1.300px;background:#d4d4d4;opacity:.6"></div><div class="abs" style="left:36.0px;top:29.0px;width:6.0px;height:1.300px;background:#9cdcfe;opacity:.6"></div><div class="abs" style="left:42.0px;top:29.0px;width:2.0px;height:1.300px;background:#d4d4d4;opacity:.6"></div><div class="abs" style="left:4.0px;top:31.0px;width:6.0px;height:1.300px;background:#c586c0;opacity:.6"></div><div class="abs" style="left:11.0px;top:31.0px;width:1.0px;height:1.300px;background:#b5cea8;opacity:.6"></div><div class="abs" style="left:12.0px;top:31.0px;width:1.0px;height:1.300px;background:#d4d4d4;opacity:.6"></div><div class="abs" style="left:0.0px;top:33.0px;width:1.0px;height:1.300px;background:#d4d4d4;opacity:.6"></div><div class="abs" style="left:0;top:30.3px;width:112px;height:2.2px;background:#28496f"></div></div><div class="abs" style="left:1374.500px;top:0;width:14px;height:580px;border-left:1px solid #383838"></div><div class="abs" style="left:1375.500px;top:185px;width:13px;height:14px;background:#6b6b1d"></div><div class="abs" style="left:1375.500px;top:185px;width:13px;height:1.500px;background:#a5a58a"></div></div>
<div id="panel" class="abs" style="top:701px"><div class="abs" style="left:19.2px;top:8.700px;height:21.300px;line-height:20px;font-size:11px;white-space:pre;color:#8a8a8a">问题</div><div class="abs" style="left:65.7px;top:8.700px;height:21.300px;line-height:20px;font-size:11px;white-space:pre;color:#8a8a8a">输出</div><div class="abs" style="left:111.9px;top:8.700px;height:21.300px;line-height:20px;font-size:11px;white-space:pre;color:#8a8a8a">调试控制台</div><div class="abs" style="left:190.3px;top:8.700px;height:21.300px;line-height:20px;font-size:11px;white-space:pre;color:#e7e7e7;border-bottom:1px solid #e7e7e7;padding:0 2.3px;margin-left:-2.3px">终端</div><svg class="abs" style="left:1078.4px;top:10.3px" width="16" height="16" viewBox="0 0 16 16" fill="#c5c5c5"><g fill="none" stroke="#c5c5c5" stroke-linecap="round"><path d="M2.700 13.300L9.800 6.200" stroke-width="2"/><path d="M14 4A2.500 2.500 0 1 1 12 2" stroke-width="1.500"/><path d="M3.300 3.300l4 4" stroke-width="1.200"/><path d="M9 9l4.200 4.200" stroke-width="2.600"/></g><path d="M1.300 1.300l2.900.900.700 1.900-1.100 1.100-1.900-.700z" fill="#c5c5c5"/></svg><span class="abs" style="left:1099.5px;top:8.500px;line-height:20px;font-size:11px;letter-spacing:-0.25px;color:#ccc;white-space:pre">Run RISCV-QEMU - Task</span><svg class="abs" style="left:1222.4px;top:10.3px" width="16" height="16" viewBox="0 0 16 16" fill="#c5c5c5"><path d="M2.500 8.800l3.300 3.700 7.700-9" fill="none" stroke="#c5c5c5" stroke-width="1.200"/></svg><svg class="abs" style="left:1248.1px;top:10.3px" width="16" height="16" viewBox="0 0 16 16" fill="#c5c5c5"><path d="M8 1.500v13M1.500 8h13" fill="none" stroke="#c5c5c5" stroke-width="1.100"/></svg><svg class="abs" style="left:1267.3px;top:12.8px" width="11" height="11" viewBox="0 0 16 16" fill="#c5c5c5"><path fill="#c5c5c5" d="M7.976 10.072l4.357-4.357.62.618L8.284 11h-.618L3 6.333l.619-.618 4.357 4.357z"/></svg><svg class="abs" style="left:1288.0px;top:10.3px" width="16" height="16" viewBox="0 0 16 16" fill="#c5c5c5"><g fill="none" stroke="#c5c5c5" stroke-width="1"><rect x="2" y="2.500" width="12" height="11" rx="0.500"/><path d="M8 2.500v11"/></g></svg><svg class="abs" style="left:1313.1px;top:10.3px" width="16" height="16" viewBox="0 0 16 16" fill="#c5c5c5"><g fill="none" stroke="#c5c5c5" stroke-width="1"><path d="M2.500 4.500h11M6 4.300V2.500h4v1.800M3.800 4.500v9h8.400v-9M6.300 6.500v5.500M8 6.500v5.500M9.700 6.500v5.500"/></g></svg><svg class="abs" style="left:1339.6px;top:10.3px" width="16" height="16" viewBox="0 0 16 16" fill="#c5c5c5"><path d="M3.500 10l4.500-4.500 4.500 4.500" fill="none" stroke="#c5c5c5" stroke-width="1.100"/></svg><svg class="abs" style="left:1361.3px;top:10.3px" width="16" height="16" viewBox="0 0 16 16" fill="#c5c5c5"><path d="M8 8.707l3.646 3.647.708-.707L8.707 8l3.647-3.646-.707-.708L8 7.293 4.354 3.646l-.707.708L7.293 8l-3.646 3.646.707.708L8 8.707z"/></svg><div class="tl code" style="top:59.1px">CC -[M] <i>正在构建</i>... jal.S</div><div class="tl code" style="top:75.1px">CC -[M] <i>正在构建</i>... main.c</div><div class="tl code" style="top:91.1px">CC -[M] <i>正在构建</i>... main.elf</div><div class="tl code" style="top:107.1px">CC -[M] <i>正在构建</i>... jal.o</div><div class="tl code" style="top:123.1px">CC -[M] <i>正在构建</i>... main.o</div><div class="tl code" style="top:155.1px"><b><i>终端将被任务重用，按任意键关闭。</i></b></div><div class="tl code" style="top:187.1px"><b>&gt; Executing task: echo Starting RISCV-QEMU&amp;qemu-riscv32 -g 1234 ./*.elf &lt;</b></div><div class="tl code" style="top:219.1px">Starting RISCV-QEMU</div><div class="tl code" style="top:235.1px">This testjalr address is:0x101a0</div><div class="tl code" style="top:251.1px">This result is:0x10188</div></div>
<div id="status" class="abs"><div class="abs" style="left:0;top:0;width:33.500px;height:22px;background:#16825d"></div><svg class="abs" style="left:9.9px;top:3.9px" width="14" height="14" viewBox="0 0 16 16"><path d="M2.600 5.500L8 10.300 2.600 15.100M13.400 1.600L8 6.400l5.400 4.800" fill="none" stroke="#fff" stroke-width="1.200"/></svg><svg class="abs" style="left:41.0px;top:3.4px" width="15" height="15" viewBox="0 0 16 16"><g fill="none" stroke="#fff" stroke-width="1.100"><circle cx="8" cy="8" r="6.300"/><path d="M5.500 5.500l5 5M10.500 5.500l-5 5"/></g></svg><span class="it" style="left:58.300px">0</span><svg class="abs" style="left:67.3px;top:3.4px" width="15" height="15" viewBox="0 0 16 16"><g fill="none" stroke="#fff" stroke-width="1.100" stroke-linejoin="round"><path d="M8 2.200L14.300 13.500H1.700z"/><path d="M8 6.500v3.500M8 11v1.200"/></g></svg><span class="it" style="left:84.300px">0</span><svg class="abs" style="left:106.4px;top:3.4px" width="15" height="15" viewBox="0 0 16 16"><g fill="none" stroke="#fff" stroke-linecap="round"><path d="M2.700 13.300L9.800 6.200" stroke-width="2"/><path d="M14 4A2.500 2.500 0 1 1 12 2" stroke-width="1.500"/><path d="M3.300 3.300l4 4" stroke-width="1.200"/><path d="M9 9l4.200 4.200" stroke-width="2.600"/></g><path d="M1.300 1.300l2.900.900.700 1.900-1.100 1.100-1.900-.700z" fill="#fff"/></svg><span class="it" style="left:123.700px">1</span><svg class="abs" style="left:145.4px;top:3.4px" width="15" height="15" viewBox="0 0 16 16"><g fill="none" stroke="#fff" stroke-width="1.100"><path d="M5.500 8V1.800l9 5.600-5.400 3.300"/><rect x="2.300" y="9.500" width="4.600" height="5" rx="2"/><path d="M2.300 11L.8 10.200M2.300 12.300H.5M2.300 13.500l-1.500.9M6.900 11l1.500-.8M6.900 12.300h1.800M6.900 13.500l1.500.9M2.600 11.100h4"/></g></svg><span class="it" style="left:163.900px;font-size:12px">(gdb) 启动 (17)</span><span class="it" style="left:1582.2px">行 16，列 1</span><span class="it" style="left:1659.8px">空格: 4</span><span class="it" style="left:1712.5px">UTF-8</span><span class="it" style="left:1762.2px">LF</span><span class="it" style="left:1791.0px">C</span><span class="it" style="left:1814.5px">Linux</span><svg class="abs" style="left:1860.5px;top:3.4px" width="15" height="15" viewBox="0 0 16 16"><g fill="none" stroke="#fff" stroke-width="1.100"><path d="M13.500 2.500h-8l-2 3.500M13.500 2.500l-2.500 4 2 2"/><circle cx="7" cy="8" r="2.200"/><path d="M2.500 14.500c.3-2.500 2-3.800 4.500-3.800s4.200 1.300 4.500 3.800"/></g></svg><svg class="abs" style="left:1890.6px;top:3.4px" width="15" height="15" viewBox="0 0 16 16"><g fill="none" stroke="#fff" stroke-width="1.100"><path d="M3 12.500V11.500l1-1.500V7a4 4 0 0 1 4-4M12 8.500v1.500l1 1.500v1H3M6.500 12.500a1.500 1.500 0 0 0 3 0"/></g><circle cx="12" cy="4" r="2.600" fill="#fff"/></svg></div>
</div>
<svg class="abs" style="left:0;top:0" width="1920" height="1018" viewBox="0 0 1920 1018" fill="none" stroke="#fb1b52" stroke-width="2.7">
<rect x="536.75" y="395.55" width="755.1" height="37.7"/>
<rect x="541.45" y="938.75" width="779.1" height="41.8"/>
</svg>
</body>
</html>
